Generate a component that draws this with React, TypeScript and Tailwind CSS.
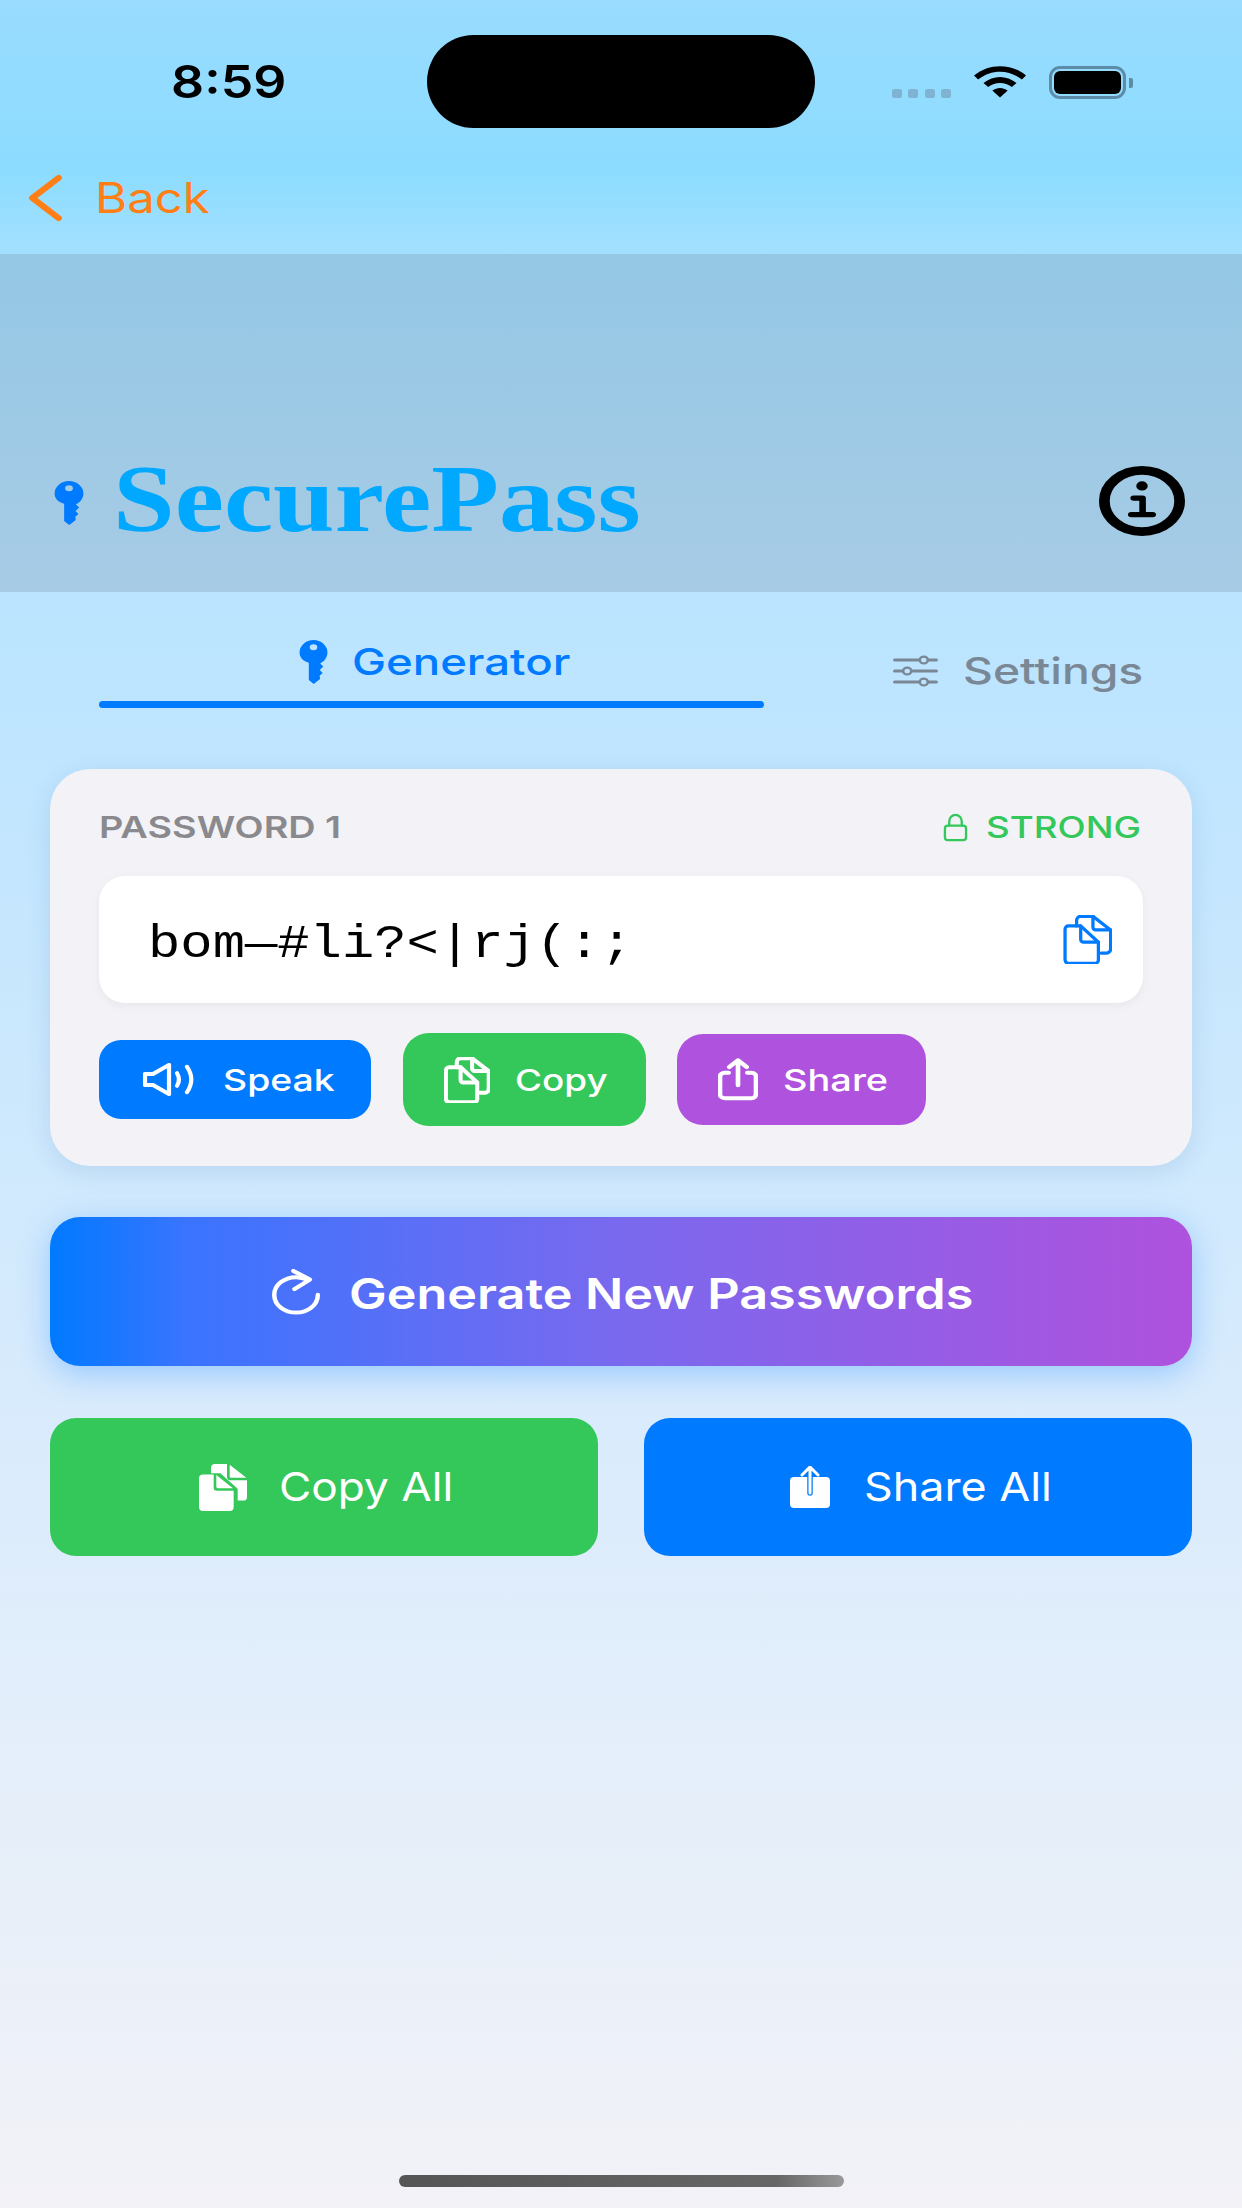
const SANS = "font-['Inter','Liberation_Sans',sans-serif]";

function Wide({ box, scale, className, children }: { box: string; scale: string; className: string; children: React.ReactNode }) {
  return (
    <span className={`inline-block shrink-0 text-left whitespace-nowrap ${box}`}>
      <span className={`inline-block origin-left ${scale} ${className}`}>{children}</span>
    </span>
  );
}

function KeyIcon({ className }: { className: string }) {
  return (
    <svg viewBox="0 0 26 44" preserveAspectRatio="none" className={className} fill="currentColor">
      <path
        fillRule="evenodd"
        d="M13 0a12.500 12.500 0 0 1 12.500 12.500c0 4.900-2.800 9-6.500 10.900l2.800 3.200-3.200 3.400 2.600 2.900-2.700 2.900.4 3.200-5.700 5-4.400-3.900V22.800C3.200 21 .5 17.200.5 12.500A12.500 12.500 0 0 1 13 0Zm0 4.200a3.400 3 0 1 0 0 6 3.400 3 0 0 0 0-6Z"
      />
    </svg>
  );
}

function CopyIcon({ className, stroke = "2.400" }: { className: string; stroke?: string }) {
  return (
    <svg viewBox="0 0 36 36" preserveAspectRatio="none" className={className} fill="none" stroke="currentColor" strokeWidth={stroke} strokeLinejoin="round" strokeLinecap="round">
      <path d="M10 8V4a3 3 0 0 1 3-3h9l13 10v14a3 3 0 0 1-3 3h-4" />
      <path d="M22 1v8a2 2 0 0 0 2 2h11" />
      <path d="M4 8h9l13 12v13a2.500 2.500 0 0 1-2.500 2.500H4A3 3 0 0 1 1.500 33V10.500A2.500 2.500 0 0 1 4 8Z" />
      <path d="M13 8v10a2 2 0 0 0 2 2h11" />
    </svg>
  );
}

function CopyFillIcon({ className }: { className: string }) {
  return (
    <svg viewBox="0 0 36 36" preserveAspectRatio="none" className={className} fill="currentColor">
      <path d="M12 0h9v9.500a3 3 0 0 0 3 3h12V25a3 3 0 0 1-3 3h-4V19L16 7H9V3a3 3 0 0 1 3-3Z" />
      <path d="M23 .5 35.500 10.500H24a1 1 0 0 1-1-1Z" />
      <path d="M3 8h8v10a2.500 2.500 0 0 0 2.500 2.500H26V33a3 3 0 0 1-3 3H3a3 3 0 0 1-3-3V11a3 3 0 0 1 3-3Z" />
      <path d="M13 8.500 25.500 18.500H14a1 1 0 0 1-1-1Z" />
    </svg>
  );
}

function ShareIcon({ className }: { className: string }) {
  return (
    <svg viewBox="0 0 30 38" preserveAspectRatio="none" className={className} fill="none" stroke="currentColor" strokeWidth="3.500" strokeLinecap="round" strokeLinejoin="round">
      <path d="M8 13H5a3.500 3.500 0 0 0-3.500 3.500v15A3.500 3.500 0 0 0 5 35.500h20a3.500 3.500 0 0 0 3.500-3.500v-15A3.500 3.500 0 0 0 25 13h-3" />
      <path d="M15 24V2M8.500 8 15 2l6.500 6" />
    </svg>
  );
}

function ShareFillIcon({ className }: { className: string }) {
  return (
    <svg viewBox="0 0 42 42" preserveAspectRatio="none" className={className}>
      <path fill="currentColor" d="M5 11h32a4 4 0 0 1 4 4v23a4 4 0 0 1-4 4H5a4 4 0 0 1-4-4V15a4 4 0 0 1 4-4Z" />
      <path d="M21 27V11" fill="none" stroke="#007aff" strokeWidth="5.500" strokeLinecap="round" />
      <path d="M21 27V2M13 9l8-8 8 8" fill="none" stroke="#fff" strokeWidth="3" strokeLinecap="round" strokeLinejoin="round" />
    </svg>
  );
}

function SpeakerIcon({ className }: { className: string }) {
  return (
    <svg viewBox="0 0 52 36" preserveAspectRatio="none" className={className} fill="none" stroke="currentColor" strokeWidth="4.200" strokeLinecap="round" strokeLinejoin="round">
      <path d="M2 12v12h8l16 10V2L10 12H2Z" />
      <path d="M34 11c2.500 4.500 2.500 9.500 0 14" />
      <path d="M44 4c5.500 9 5.500 19 0 28" />
    </svg>
  );
}

function SlidersIcon({ className }: { className: string }) {
  return (
    <svg viewBox="0 0 38 32" preserveAspectRatio="none" className={className} fill="none" stroke="currentColor" strokeLinecap="round">
      <path d="M1.500 5h20M30 5h6.500M1.500 16h6M16 16h20.500M1.500 27h20M30 27h6.500" strokeWidth="3" />
      <circle cx="26" cy="5" r="3.400" strokeWidth="2.200" />
      <circle cx="12" cy="16" r="3.400" strokeWidth="2.200" />
      <circle cx="26" cy="27" r="3.400" strokeWidth="2.200" />
    </svg>
  );
}

function RefreshIcon({ className }: { className: string }) {
  return (
    <svg viewBox="0 0 48 48" preserveAspectRatio="none" className={className} fill="none" stroke="currentColor" strokeWidth="4.200" strokeLinecap="round" strokeLinejoin="round">
      <path d="M36 11.500C32 9.500 29 8.500 24.500 8.500A20.500 18.500 0 1 0 45 27" />
      <path d="M22 2l15.500 9L23 21" />
    </svg>
  );
}

function InfoIcon({ className }: { className: string }) {
  return (
    <svg viewBox="0 0 72 72" preserveAspectRatio="none" className={className}>
      <circle cx="36" cy="36" r="31.500" fill="none" stroke="currentColor" strokeWidth="9" />
      <circle cx="36" cy="20.500" r="4.800" fill="currentColor" />
      <path d="M29 33h7.500v16M27 50h18" fill="none" stroke="currentColor" strokeWidth="5.500" strokeLinecap="round" strokeLinejoin="round" />
    </svg>
  );
}

function StatusBar() {
  return (
    <div className="relative flex h-[150px] shrink-0 items-start justify-between">
      <div className="ml-[171px] mt-[55px] text-black">
        <Wide box="w-[114px]" scale="scale-x-[1.15]" className={`${SANS} text-[45px] leading-[54px] font-semibold`}>8:59</Wide>
      </div>
      <div className="absolute left-[427px] top-[35px] h-[93px] w-[388px] rounded-[47px] bg-black" />
      <div className="mr-[109px] mt-[66px] flex items-start">
        <div className="mt-[23px] flex gap-[6.500px]">
          <span className="h-[9px] w-[10px] rounded-[2.500px] bg-[#7fb3d1]" />
          <span className="h-[9px] w-[10px] rounded-[2.500px] bg-[#7fb3d1]" />
          <span className="h-[9px] w-[10px] rounded-[2.500px] bg-[#7fb3d1]" />
          <span className="h-[9px] w-[10px] rounded-[2.500px] bg-[#7fb3d1]" />
        </div>
        <svg viewBox="0 0 44 32" preserveAspectRatio="none" className="ml-[23px] h-[32px] w-[52px]" fill="#000">
          <path d="M0 9.500C12.500-3 31.500-3 44 9.500L40.500 13.500C29.500 3 14.500 3 3.500 13.500Z" />
          <path d="M8 17C16.500 9 27.500 9 36 17L32 21C26 15.500 18 15.500 12 21Z" />
          <path d="M15.500 24.500C19.500 21 24.500 21 28.500 24.500L22 31.500Z" />
        </svg>
        <div className="ml-[23px] h-[33px] w-[77px] rounded-[11px] border-[3px] border-[#5d8ca8] p-[2px]">
          <div className="h-full w-full rounded-[6px] bg-black" />
        </div>
        <div className="ml-[3px] mt-[12px] h-[10px] w-[4px] rounded-r-[2px] bg-[#5d8ca8]" />
      </div>
    </div>
  );
}

export default function App() {
  return (
    <div className="flex min-h-[2208px] w-[1242px] flex-col overflow-hidden bg-[linear-gradient(180deg,#99dcff_0px,#8cdcff_170px,#a3e0ff_254px,#bae4ff_600px,#dcecfc_1500px,#f2f2f7_2208px)]">
      <StatusBar />

      <div className="flex h-[104px] shrink-0 items-center pb-[8px] pl-[28px]">
        <svg viewBox="0 0 32 50" preserveAspectRatio="none" className="h-[48px] w-[35px] text-[#ff7f16]" fill="none" stroke="currentColor" strokeWidth="6" strokeLinecap="round" strokeLinejoin="round">
          <path d="M28 4 4 25l24 21" />
        </svg>
        <span className="ml-[32px]">
          <Wide box="w-[113px]" scale="scale-x-[1.17]" className={`${SANS} text-[42px] leading-[50px] text-[#ff7f16]`}>Back</Wide>
        </span>
      </div>

      <div className="flex h-[338px] shrink-0 items-end justify-between bg-[linear-gradient(180deg,#94c8e5,#a7cbe5)] pr-[57px] pb-[43px] pl-[54px]">
        <div className="flex items-center">
          <KeyIcon className="mt-[7px] h-[44px] w-[30px] text-[#007aff]" />
          <span className="ml-[29px]">
            <Wide box="w-[524px]" scale="scale-x-[1.155]" className="font-['Liberation_Serif',serif] text-[96px] leading-[100px] font-bold text-[#00a8ff]">SecurePass</Wide>
          </span>
        </div>
        <InfoIcon className="mb-[13px] h-[70px] w-[86px] text-black" />
      </div>

      <div className="flex h-[116px] shrink-0 pt-[48px] pl-[99px]">
        <div className="flex h-[68px] w-[665px] flex-col items-center justify-between">
          <div className="flex items-center pl-[4px]">
            <KeyIcon className="h-[44px] w-[29px] text-[#007aff]" />
            <span className="ml-[24px]">
              <Wide box="w-[216px]" scale="scale-x-[1.23]" className={`${SANS} text-[37px] leading-[44px] font-medium text-[#007aff]`}>Generator</Wide>
            </span>
          </div>
          <div className="h-[7px] w-full rounded-full bg-[#007aff]" />
        </div>
        <div className="ml-[129px] mt-[9px] flex h-[44px] items-center">
          <SlidersIcon className="h-[32px] w-[45px] text-[#7a8794]" />
          <span className="ml-[25px]">
            <Wide box="w-[178px]" scale="scale-x-[1.25]" className={`${SANS} text-[37px] leading-[44px] font-medium text-[#7a8794]`}>Settings</Wide>
          </span>
        </div>
      </div>

      <div className="mx-[50px] mt-[61px] flex flex-col rounded-[40px] bg-[#f2f2f7] px-[49px] pt-[41px] pb-[40px] shadow-[0_6px_24px_rgba(0,80,160,0.12)]">
        <div className="flex h-[34px] items-center justify-between">
          <Wide box="w-[241px]" scale="scale-x-[1.26]" className={`${SANS} text-[30px] leading-[34px] font-semibold text-[#8a8a8e]`}>PASSWORD 1</Wide>
          <span className="flex items-center">
            <svg viewBox="0 0 26 30" preserveAspectRatio="none" className="h-[29px] w-[25px] text-[#34c759]" fill="none" stroke="currentColor" strokeWidth="2.400" strokeLinecap="round">
              <rect x="2" y="13" width="22" height="15" rx="3" />
              <path d="M6.500 13V8.500a6.500 6.500 0 0 1 13 0V13" />
            </svg>
            <span className="ml-[18px]">
              <Wide box="w-[157px]" scale="scale-x-[1.225]" className={`${SANS} text-[30px] leading-[34px] font-medium text-[#34c759]`}>STRONG</Wide>
            </span>
          </span>
        </div>
        <div className="mt-[32px] flex h-[127px] items-center justify-between rounded-[26px] bg-white pr-[31px] pl-[49px] shadow-[0_3px_10px_rgba(0,0,0,0.05)]">
          <span className="mt-[10px]">
            <Wide box="w-[480px]" scale="scale-x-[1.158]" className="font-['Liberation_Mono',monospace] text-[46.500px] leading-[56px] text-black">bom—#li?&lt;|rj(:;</Wide>
          </span>
          <CopyIcon className="h-[49px] w-[49px] text-[#007aff]" />
        </div>
        <div className="mt-[30px] flex h-[93px] items-center">
          <button className="flex h-[79px] w-[272px] items-center justify-center rounded-[22px] bg-[#007aff] pl-[5px] text-white">
            <SpeakerIcon className="h-[33px] w-[52px]" />
            <span className="ml-[28px]">
              <Wide box="w-[110px]" scale="scale-x-[1.245]" className={`${SANS} text-[30px] leading-[36px] font-medium`}>Speak</Wide>
            </span>
          </button>
          <button className="ml-[32px] flex h-[93px] w-[243px] items-center justify-center rounded-[26px] bg-[#34c759] text-white">
            <CopyIcon className="h-[46px] w-[46px]" stroke="3.200" />
            <span className="ml-[25px]">
              <Wide box="w-[91px]" scale="scale-x-[1.23]" className={`${SANS} text-[30px] leading-[36px] font-medium`}>Copy</Wide>
            </span>
          </button>
          <button className="ml-[31px] flex h-[91px] w-[249px] items-center justify-center rounded-[26px] bg-[#af52de] text-white">
            <ShareIcon className="h-[43px] w-[40px]" />
            <span className="ml-[25px]">
              <Wide box="w-[103px]" scale="scale-x-[1.265]" className={`${SANS} text-[30px] leading-[36px] font-medium`}>Share</Wide>
            </span>
          </button>
        </div>
      </div>

      <button className="mx-[50px] mt-[51px] flex h-[149px] shrink-0 items-center justify-center rounded-[30px] bg-[linear-gradient(90deg,#007aff,#3a74ff_12%,#7a69ee_50%,#af52de_100%)] text-white shadow-[0_8px_32px_rgba(0,122,255,0.3)]">
        <RefreshIcon className="h-[46px] w-[51px]" />
        <span className="ml-[28px] pt-[4px]">
          <Wide box="w-[624px]" scale="scale-x-[1.198]" className={`${SANS} text-[42px] leading-[52px] font-semibold`}>Generate New Passwords</Wide>
        </span>
      </button>

      <div className="mx-[50px] mt-[52px] flex gap-[46px]">
        <button className="flex h-[138px] flex-1 items-center justify-center rounded-[26px] bg-[#34c759] text-white">
          <CopyFillIcon className="h-[47px] w-[48px]" />
          <span className="ml-[32px]">
            <Wide box="w-[171px]" scale="scale-x-[1.105]" className={`${SANS} text-[40px] leading-[48px]`}>Copy All</Wide>
          </span>
        </button>
        <button className="flex h-[138px] flex-1 items-center justify-center rounded-[26px] bg-[#007aff] text-white">
          <ShareFillIcon className="h-[42px] w-[42px]" />
          <span className="ml-[33px]">
            <Wide box="w-[183px]" scale="scale-x-[1.12]" className={`${SANS} text-[40px] leading-[48px]`}>Share All</Wide>
          </span>
        </button>
      </div>

      <div className="mt-auto flex justify-center pb-[21px]">
        <div className="h-[12px] w-[445px] rounded-full bg-[linear-gradient(90deg,#555_0%,#666_85%,#999_100%)]" />
      </div>
    </div>
  );
}
